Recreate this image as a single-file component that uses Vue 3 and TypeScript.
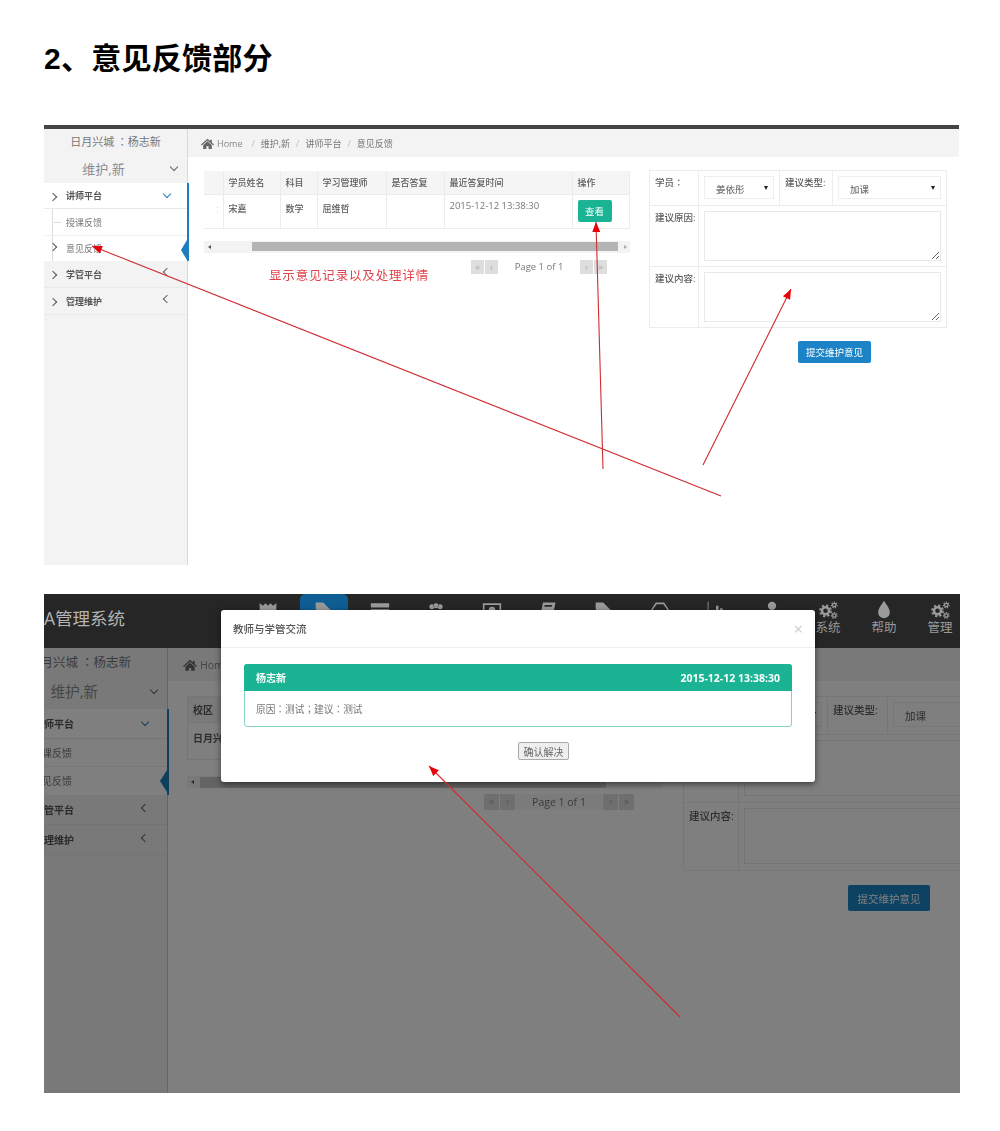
<script setup lang="ts">
interface Arrow {
  from: [number, number]
  to: [number, number]
}

interface NavItem {
  label?: string
  active?: boolean
  kind: 'path' | 'cogs'
  d?: string
}

const crumbs = ['维护,新', '讲师平台', '意见反馈']

const columns = [
  { title: '学员姓名', value: '宋嘉', width: 57 },
  { title: '科目', value: '数学', width: 37 },
  { title: '学习管理师', value: '屈维哲', width: 69 },
  { title: '是否答复', value: '', width: 58 },
  { title: '最近答复时间', value: '2015-12-12 13:38:30', width: 128 }
]

const tag = 'M2 3h9l11 11-8 8L2 11z'
const navItems: NavItem[] = [
  { kind: 'path', d: 'M2 4l4 3 3-3 3 3 3-3 3 3 4-3v16H2z' },
  { kind: 'path', active: true, d: tag },
  { kind: 'path', d: 'M1 4h22v5H1zM1 11h22v9H1zM4 14v2h12v-2z' },
  { kind: 'path', d: 'M7 5a3 3 0 1 1 0 6 3 3 0 0 1 0-6zM17 5a3 3 0 1 1 0 6 3 3 0 0 1 0-6zM12 4a3 3 0 1 1 0 6 3 3 0 0 1 0-6zM1 20v-5c0-3 12-3 22 0v5z' },
  { kind: 'path', d: 'M1 4h22v16H1zM3 6v12h18V6zM12 8a4 4 0 1 1 0 8 4 4 0 0 1 0-8z' },
  { kind: 'path', d: 'M6 3h15l-3 15H3zM8 6l-.5 2h9l.5-2z' },
  { kind: 'path', d: tag },
  { kind: 'path', d: 'M7 3h10l6 9-6 9H7l-6-9zM8 5l-5 7 5 7h8l5-7-5-7z' },
  { kind: 'path', d: 'M2 2h1v20H2zM7 12h3v9H7zM12 7h3v14h-3zM17 10h3v11h-3z' },
  { kind: 'path', d: 'M12 2a5 5 0 1 1 0 10 5 5 0 0 1 0-10zM3 22v-3c0-6 18-6 18 0v3z' },
  { kind: 'cogs', label: '系统' },
  { kind: 'path', label: '帮助', d: 'M12 1c3 5 7 9 7 14a7 7 0 0 1-14 0c0-5 4-9 7-14z' },
  { kind: 'cogs', label: '管理' }
]

const rawArrows: Arrow[] = [
  { from: [721, 496], to: [92, 246] },
  { from: [603, 469], to: [596, 222] },
  { from: [703, 465], to: [791, 289] },
  { from: [680, 1017], to: [429, 766] }
]

const arrows = rawArrows.map(({ from, to }) => {
  const dx = to[0] - from[0]
  const dy = to[1] - from[1]
  const len = Math.hypot(dx, dy)
  const ux = dx / len
  const uy = dy / len
  const bx = to[0] - ux * 10
  const by = to[1] - uy * 10
  const head = [
    `${to[0]},${to[1]}`,
    `${bx - uy * 4},${by + ux * 4}`,
    `${bx + uy * 4},${by - ux * 4}`
  ].join(' ')
  return { from, to, head }
})
</script>

<template>
  <div class="page">
    <h1 class="title">2、意见反馈部分</h1>

    <!-- first screenshot -->
    <section class="shot shot-top">
      <aside class="sidebar">
        <div class="side-user">日月兴城 ：杨志新</div>
        <div class="side-role">维护,新<i class="chev down"></i></div>
        <div class="side-open">
          <div class="side-item"><i class="chev right lead"></i><b>讲师平台</b><i class="chev down blue"></i></div>
          <div class="side-subs">
            <div class="side-sub tick">授课反馈</div>
            <div class="side-sub current"><i class="chev right sub-lead"></i>意见反馈</div>
          </div>
        </div>
        <div class="side-item closed"><i class="chev right lead"></i><b>学管平台</b><i class="chev left"></i></div>
        <div class="side-item closed"><i class="chev right lead"></i><b>管理维护</b><i class="chev left"></i></div>
      </aside>

      <div class="main">
        <div class="crumbs">
          <svg class="home" viewBox="0 0 24 20"><path d="M12 1l5 4.500V3h3v5.200L24 12l-1.500 1.500L12 4.500 1.500 13.500 0 12zM4 13l8-7 8 7v7h-6v-5h-4v5H4z" fill="currentColor" /></svg>
          <span class="home-text">Home</span>
          <template v-for="c in crumbs" :key="c"><span class="slash">/</span><span>{{ c }}</span></template>
        </div>
        <div class="body">
          <div class="records">
            <table class="grid">
              <thead>
                <tr>
                  <th class="cut"></th>
                  <th v-for="col in columns" :key="col.title" :style="{ width: col.width + 'px' }">{{ col.title }}</th>
                  <th>操作</th>
                </tr>
              </thead>
              <tbody>
                <tr>
                  <td class="cut">:</td>
                  <td v-for="col in columns" :key="col.title" :class="{ latin: col.width === 128 }">{{ col.value }}</td>
                  <td><button class="btn-view" type="button">查看</button></td>
                </tr>
              </tbody>
            </table>
            <div class="scroll"><span class="sc-arrow l"></span><div class="thumb"></div><span class="sc-arrow r"></span></div>
            <div class="below">
              <p class="note">显示意见记录以及处理详情</p>
              <div class="pager">
                <span class="pg">«</span><span class="pg">‹</span><span class="pg-mid">Page 1 of 1</span><span class="pg">›</span><span class="pg">»</span>
              </div>
            </div>
          </div>

          <div class="advice">
            <table class="form">
              <tbody>
                <tr class="r1">
                  <th class="c1">学员：</th>
                  <td class="c2"><div class="pick">姜依彤<i></i></div></td>
                  <th class="c3">建议类型:</th>
                  <td class="c4"><div class="pick">加课<i></i></div></td>
                </tr>
                <tr class="r2">
                  <th>建议原因:</th>
                  <td colspan="3"><textarea></textarea></td>
                </tr>
                <tr class="r2">
                  <th>建议内容:</th>
                  <td colspan="3"><textarea></textarea></td>
                </tr>
              </tbody>
            </table>
            <div class="submit-row"><button class="btn-submit" type="button">提交维护意见</button></div>
          </div>
        </div>
      </div>
    </section>

    <!-- second screenshot, dimmed behind the dialog -->
    <section class="shot shot-dim">
      <header class="topbar">
        <div class="logo">A管理系统</div>
        <nav class="nav">
          <div v-for="(item, i) in navItems" :key="i" class="nav-item" :class="{ active: item.active }">
            <svg v-if="item.kind === 'path'" class="nav-icon" viewBox="0 0 24 24"><path :d="item.d" fill="currentColor" fill-rule="evenodd" /></svg>
            <svg v-else class="nav-icon" viewBox="0 0 24 24" fill="none" stroke="currentColor">
              <circle cx="9" cy="13" r="4.200" stroke-width="3" />
              <circle cx="9" cy="13" r="6.500" stroke-width="2.400" stroke-dasharray="2.600 2.500" />
              <circle cx="19.500" cy="6" r="2" stroke-width="1.500" />
              <circle cx="19.500" cy="6" r="3.400" stroke-width="1.400" stroke-dasharray="1.600 1.400" />
              <circle cx="19.500" cy="18.500" r="2" stroke-width="1.500" />
              <circle cx="19.500" cy="18.500" r="3.400" stroke-width="1.400" stroke-dasharray="1.600 1.400" />
            </svg>
            <span v-if="item.label" class="nav-label">{{ item.label }}</span>
          </div>
        </nav>
      </header>

      <div class="under">
        <aside class="sidebar">
          <div class="side-user">日月兴城 ：杨志新</div>
          <div class="side-role">维护,新<i class="chev down"></i></div>
          <div class="side-open">
            <div class="side-item"><b>讲师平台</b><i class="chev down blue"></i></div>
            <div class="side-subs">
              <div class="side-sub">授课反馈</div>
              <div class="side-sub current">意见反馈</div>
            </div>
          </div>
          <div class="side-item closed"><b>学管平台</b><i class="chev left"></i></div>
          <div class="side-item closed"><b>管理维护</b><i class="chev left"></i></div>
        </aside>

        <div class="main">
          <div class="crumbs">
            <svg class="home" viewBox="0 0 24 20"><path d="M12 1l5 4.500V3h3v5.200L24 12l-1.500 1.500L12 4.500 1.500 13.500 0 12zM4 13l8-7 8 7v7h-6v-5h-4v5H4z" fill="currentColor" /></svg>
            <span class="home-text">Home</span>
          </div>
          <div class="body">
            <div class="records">
              <table class="grid">
                <thead>
                  <tr>
                    <th class="campus">校区</th>
                    <th v-for="col in columns" :key="col.title"></th>
                  </tr>
                </thead>
                <tbody>
                  <tr>
                    <td class="campus">日月兴城</td>
                    <td v-for="col in columns" :key="col.title"></td>
                  </tr>
                </tbody>
              </table>
              <div class="scroll"><span class="sc-arrow l"></span><div class="thumb"></div></div>
              <div class="below">
                <div class="pager">
                  <span class="pg">«</span><span class="pg">‹</span><span class="pg-mid">Page 1 of 1</span><span class="pg">›</span><span class="pg">»</span>
                </div>
              </div>
            </div>

            <div class="advice">
              <table class="form">
                <tbody>
                  <tr class="r1">
                    <th class="c1"></th>
                    <td class="c2"><div class="pick"><i></i></div></td>
                    <th class="c3">建议类型:</th>
                    <td class="c4"><div class="pick">加课<i></i></div></td>
                  </tr>
                  <tr class="r2">
                    <th></th>
                    <td colspan="3"><textarea></textarea></td>
                  </tr>
                  <tr class="r2">
                    <th>建议内容:</th>
                    <td colspan="3"><textarea></textarea></td>
                  </tr>
                </tbody>
              </table>
              <div class="submit-row"><button class="btn-submit" type="button">提交维护意见</button></div>
            </div>
          </div>
        </div>
      </div>

      <div class="backdrop"></div>

      <div class="modal">
        <div class="modal-head">
          <span>教师与学管交流</span>
          <span class="modal-close">×</span>
        </div>
        <div class="modal-body">
          <div class="talk">
            <div class="talk-head"><span>杨志新</span><span class="talk-time">2015-12-12 13:38:30</span></div>
            <div class="talk-text">原因：测试；建议：测试</div>
          </div>
          <div class="modal-foot"><button class="btn-ok" type="button">确认解决</button></div>
        </div>
      </div>
    </section>

    <!-- red annotation arrows drawn over both screenshots -->
    <svg class="marks" viewBox="0 0 1000 1131">
      <g v-for="(a, i) in arrows" :key="i">
        <line :x1="a.from[0]" :y1="a.from[1]" :x2="a.to[0]" :y2="a.to[1]" stroke="#cf2b30" stroke-width="1.100" />
        <polygon :points="a.head" fill="#e8000b" />
      </g>
    </svg>
  </div>
</template>

<style>
html,
body {
  margin: 0;
  background: #fff;
}
</style>

<style scoped>
.page {
  position: relative;
  width: 1000px;
  height: 1131px;
  padding-top: 41px;
  box-sizing: border-box;
  overflow: hidden;
  font-family: "Open Sans", "Noto Sans CJK SC", sans-serif;
  color: #676a6c;
}

.title {
  margin: 0 0 48px 44px;
  font-family: "Liberation Sans", "Noto Sans CJK SC", sans-serif;
  font-size: 30px;
  letter-spacing: 0.25px;
  line-height: 36px;
  font-weight: 700;
  color: #000;
}

.marks {
  position: absolute;
  left: 0;
  top: 0;
  width: 1000px;
  height: 1131px;
  z-index: 5;
  pointer-events: none;
}

.shot {
  position: relative;
  overflow: hidden;
  margin-left: 44px;
  filter: blur(0.35px);
}

.shot-top {
  display: flex;
  width: 915px;
  height: 440px;
  border-top: 4px solid #444;
  box-sizing: border-box;
}

.sidebar {
  flex: none;
  width: 143px;
  height: 100%;
  background: #f3f3f4;
  border-right: 1px solid #d8d8d8;
  box-sizing: content-box;
}

.side-user {
  height: 28px;
  line-height: 25px;
  text-align: center;
  font-family: "Noto Sans CJK TC", "Noto Sans CJK SC", sans-serif;
  font-size: 11px;
  color: #777;
}

.side-role {
  position: relative;
  height: 26px;
  line-height: 24px;
  padding-right: 24px;
  text-align: center;
  font-size: 13px;
  color: #8c8c8c;
}

.side-role .chev {
  position: absolute;
  right: 10px;
  top: 7px;
}

.side-open {
  position: relative;
  background: #fff;
  box-shadow: 2px 0 0 #1c7ebb;
}

.side-item {
  position: relative;
  display: flex;
  align-items: center;
  height: 26px;
  padding-left: 22px;
  font-size: 9px;
  color: #555;
  border-bottom: 1px solid #e9e9e9;
  box-sizing: border-box;
}

.side-item b {
  font-weight: 700;
}

.side-item .chev:last-child {
  position: absolute;
  right: 17px;
  top: 8px;
}

.side-item.closed {
  height: 27px;
}

.side-subs {
  position: relative;
  margin-left: 8px;
  border-left: 1px solid #dcdcdc;
}

.side-sub {
  position: relative;
  height: 27px;
  line-height: 27px;
  margin-left: -8px;
  font-size: 9px;
  color: #777;
  border-bottom: 1px solid #eee;
  padding-left: 21px;
  box-sizing: border-box;
}

.side-sub.current {
  height: 25px;
  line-height: 25px;
  border-bottom: none;
}

.side-sub.tick::before {
  content: "";
  position: absolute;
  left: 9px;
  top: 13px;
  width: 7px;
  border-top: 1px solid #ddd;
}

.side-sub.current::after {
  content: "";
  position: absolute;
  right: 0;
  top: 4px;
  width: 6px;
  height: 20px;
  background: #1c7ebb;
  clip-path: polygon(100% 0, 100% 100%, 0 50%);
}

.chev {
  display: block;
  width: 5px;
  height: 5px;
  border-right: 1px solid #666;
  border-bottom: 1px solid #666;
}

.chev.down {
  transform: rotate(45deg);
}

.chev.left {
  transform: rotate(135deg);
}

.chev.right {
  transform: rotate(-45deg);
}

.chev.blue {
  border-color: #2a7bb5;
}

.chev.lead {
  position: absolute;
  left: 6px;
  top: 11px;
  border-color: #555;
}

.chev.sub-lead {
  position: absolute;
  left: 5px;
  top: 8px;
  border-color: #555;
}

.main {
  flex: 1;
  min-width: 0;
  display: flex;
  flex-direction: column;
}

.crumbs {
  display: flex;
  align-items: center;
  flex: none;
  height: 28px;
  padding-left: 13px;
  background: #f3f3f4;
  font-size: 9px;
  color: #777;
}

.home {
  width: 13px;
  height: 11px;
  margin-right: 3px;
  color: #666;
}

.home-text {
  margin-right: 3px;
  font-size: 9px;
  color: #888;
}

.slash {
  margin: 0 6px;
  color: #bbb;
}

.body {
  display: flex;
  gap: 19px;
  padding: 13px 0 0 16px;
}

.records {
  flex: none;
  width: 426px;
  padding-top: 1px;
}

.grid {
  width: 426px;
  border-collapse: collapse;
  table-layout: fixed;
  font-size: 9px;
}

.grid th,
.grid td {
  border: 1px solid #ececec;
  padding: 0 0 0 5px;
  text-align: left;
  color: #5c5c5c;
  box-sizing: border-box;
}

.grid th {
  height: 23px;
  background: #f5f5f6;
  font-weight: 500;
  border-top: none;
}

.grid td {
  height: 34px;
  vertical-align: top;
  padding-top: 7px;
  font-weight: 500;
}

.grid .cut {
  width: 19px;
  border-left: none;
  color: #cfd8e0;
  padding-left: 12px;
}

.grid td.latin {
  font-size: 9.500px;
  font-weight: 400;
  padding-top: 4px;
  color: #777;
}

.btn-view {
  display: block;
  width: 34px;
  height: 22px;
  margin: -2px 0 0 0;
  padding: 0;
  border: none;
  border-radius: 2px;
  background: #1ab394;
  color: #fff;
  font-family: inherit;
  font-size: 9.500px;
}

.scroll {
  display: flex;
  align-items: center;
  height: 12px;
  margin-top: 12px;
  background: #f3f3f3;
  padding: 0 0 0 48px;
  position: relative;
}

.thumb {
  width: 366px;
  height: 9px;
  background: #b4b4b4;
}

.sc-arrow {
  position: absolute;
  width: 0;
  height: 0;
  border-top: 2.500px solid transparent;
  border-bottom: 2.500px solid transparent;
}

.sc-arrow.l {
  left: 4px;
  border-right: 3px solid #555;
}

.sc-arrow.r {
  right: 3px;
  border-left: 3px solid #aaa;
}

.below {
  position: relative;
  display: flex;
  height: 40px;
}

.note {
  margin: 15px 0 0 65px;
  font-size: 12.500px;
  letter-spacing: 0.830px;
  line-height: 16px;
  color: #e0454e;
}

.pager {
  position: absolute;
  left: 267px;
  top: 7px;
  display: flex;
  height: 14px;
  font-size: 9.500px;
  color: #777;
}

.pg {
  width: 13px;
  text-align: center;
  line-height: 13px;
  margin-right: 1px;
  background: #dedede;
  color: #aaa;
  box-sizing: border-box;
}

.pg-mid {
  width: 80px;
  text-align: center;
  line-height: 14px;
  background: #fff;
  margin-right: 1px;
}

.advice {
  flex: none;
  width: 298px;
}

.form {
  width: 298px;
  border-collapse: collapse;
  table-layout: fixed;
  font-size: 9.500px;
}

.form th,
.form td {
  border: 1px solid #ececec;
  text-align: left;
  vertical-align: top;
  color: #5c5c5c;
  font-weight: 500;
  box-sizing: border-box;
}

.form th {
  padding: 4px 0 0 5px;
}

.form td {
  padding: 5px;
}

.form .c1 {
  width: 49px;
  font-family: "Noto Sans CJK TC", "Noto Sans CJK SC", sans-serif;
}

.form .c2 {
  width: 81px;
}

.form .c3 {
  width: 53px;
  padding-top: 4px;
}

.r1 {
  height: 35px;
}

.r2 {
  height: 61px;
}

.pick {
  position: relative;
  height: 23px;
  line-height: 25px;
  padding-left: 11px;
  border: 1px solid #eee;
  box-sizing: border-box;
  font-size: 9.500px;
  color: #777;
}

.pick i {
  position: absolute;
  right: 5px;
  top: 9px;
  width: 0;
  height: 0;
  border-left: 2.500px solid transparent;
  border-right: 2.500px solid transparent;
  border-top: 4px solid #222;
}

.form textarea {
  display: block;
  width: 100%;
  height: 50px;
  margin: 0;
  padding: 0;
  border: 1px solid #e9e9e9;
  box-sizing: border-box;
  background: #fff;
  outline: none;
}

.submit-row {
  display: flex;
  margin-top: 13px;
  padding-left: 149px;
}

.btn-submit {
  width: 73px;
  height: 22px;
  padding: 0;
  border: none;
  border-radius: 2px;
  background: #1c84c6;
  color: #fff;
  font-family: inherit;
  font-size: 9.500px;
}

/* second screenshot: same page a little larger */
.shot-dim {
  width: 916px;
  height: 499px;
  margin-top: 29px;
}

.topbar {
  position: relative;
  z-index: 2;
  display: flex;
  height: 54px;
  background: #262626;
}

.logo {
  flex: none;
  width: 196px;
  line-height: 48px;
  font-size: 17.500px;
  color: #b3b3b3;
}

.nav {
  display: flex;
}

.nav-item {
  position: relative;
  display: flex;
  flex-direction: column;
  align-items: center;
  width: 56px;
  padding-top: 6px;
  box-sizing: border-box;
  color: #9a9a9a;
}

.nav-item.active::before {
  content: "";
  position: absolute;
  left: 4px;
  right: 4px;
  top: 0;
  height: 40px;
  border-radius: 5px;
  background: #0e5e94;
}

.nav-icon {
  position: relative;
  width: 20px;
  height: 20px;
}

.nav-label {
  font-size: 12.500px;
  line-height: 16px;
  margin-top: 0;
}

.under {
  display: flex;
  height: 445px;
}

.shot-dim .sidebar {
  width: 175px;
  margin-left: -52px;
  border-right-color: #ccc;
}

.shot-dim .side-user {
  height: 30px;
  line-height: 28px;
  font-size: 12.500px;
}

.shot-dim .side-role {
  height: 31px;
  line-height: 28px;
  padding-right: 10px;
  font-size: 14.500px;
}

.shot-dim .side-role .chev {
  top: 9px;
  right: 10px;
}

.shot-dim .side-item {
  height: 30px;
  padding-left: 35px;
  font-size: 10px;
}

.shot-dim .side-item b {
  margin-left: 7px;
}

.shot-dim .side-item .chev:last-child {
  right: 19px;
  top: 10px;
}

.shot-dim .side-subs {
  margin: 0;
  border: none;
}

.shot-dim .side-sub {
  height: 28px;
  line-height: 28px;
  margin: 0;
  padding-left: 40px;
  font-size: 10px;
}

.shot-dim .side-sub.current::after {
  top: 3px;
  width: 7px;
  height: 22px;
}

.shot-dim .crumbs {
  height: 33px;
  padding-left: 15px;
}

.shot-dim .home {
  width: 14px;
  height: 12px;
}

.shot-dim .home-text {
  font-size: 10.500px;
}

.shot-dim .body {
  padding: 15px 0 0 19px;
  gap: 21px;
}

.shot-dim .records {
  width: 475px;
  padding-top: 0;
}

.shot-dim .grid {
  width: 475px;
  font-size: 10px;
  border-left: 1px solid #ececec;
}

.shot-dim .grid th {
  height: 26px;
  border-top: 1px solid #ececec;
}

.shot-dim .grid td {
  height: 37px;
  font-weight: 700;
}

.shot-dim .grid .campus {
  font-weight: 700;
}

.shot-dim .scroll {
  margin-top: 16px;
  padding-left: 13px;
}

.shot-dim .thumb {
  width: 406px;
  height: 11px;
  background: #c8c8c8;
}

.shot-dim .pager {
  left: 297px;
  top: 6px;
  height: 16px;
  font-size: 10.500px;
}

.shot-dim .pg {
  width: 15px;
  line-height: 15px;
}

.shot-dim .pg-mid {
  width: 86px;
  line-height: 16px;
  background: #f6f6f6;
}

.shot-dim .advice,
.shot-dim .form {
  width: 331px;
  font-size: 10.500px;
}

.shot-dim .form th {
  padding-top: 5px;
}

.shot-dim .form .c1 {
  width: 55px;
}

.shot-dim .form .c2 {
  width: 89px;
}

.shot-dim .form .c3 {
  width: 60px;
}

.shot-dim .r1 {
  height: 38px;
}

.shot-dim .r2 {
  height: 68px;
}

.shot-dim .form textarea {
  height: 56px;
}

.shot-dim .pick {
  height: 25px;
  line-height: 27px;
  font-size: 10.500px;
}

.shot-dim .submit-row {
  margin-top: 14px;
  padding-left: 165px;
}

.shot-dim .btn-submit {
  width: 82px;
  height: 26px;
  font-size: 10.500px;
}

.backdrop {
  position: absolute;
  inset: 0;
  z-index: 1;
  background: rgba(0, 0, 0, 0.5);
}

.modal {
  position: absolute;
  left: 177px;
  top: 16px;
  z-index: 3;
  width: 594px;
  height: 172px;
  background: #fff;
  border-radius: 3px;
  box-shadow: 0 2px 6px rgba(0, 0, 0, 0.55);
}

.modal-head {
  display: flex;
  align-items: center;
  justify-content: space-between;
  height: 38px;
  padding: 0 12px;
  border-bottom: 1px solid #eee;
  font-size: 10.500px;
  font-weight: 500;
  color: #555;
  box-sizing: border-box;
}

.modal-close {
  font-size: 16px;
  color: #ccc;
}

.modal-body {
  padding: 16px 23px 0;
}

.talk {
  height: 63px;
  border: 1px solid #87d3c3;
  border-radius: 3px;
  box-sizing: border-box;
}

.talk-head {
  display: flex;
  justify-content: space-between;
  align-items: center;
  height: 27px;
  margin: -1px -1px 0;
  padding: 0 12px;
  border-radius: 3px 3px 0 0;
  background: #1ab394;
  color: #fff;
  font-size: 10px;
  font-weight: 700;
}

.talk-time {
  font-size: 10.500px;
}

.talk-text {
  padding: 10px 11px 0;
  font-family: "Noto Sans CJK TC", "Noto Sans CJK SC", sans-serif;
  font-size: 9.700px;
  line-height: 16px;
  color: #777;
}

.modal-foot {
  display: flex;
  justify-content: center;
  margin-top: 15px;
  padding-left: 51px;
}

.btn-ok {
  width: 51px;
  height: 18px;
  padding: 0;
  border: 1px solid #aaa;
  border-radius: 2px;
  background: #eee;
  color: #666;
  font-family: inherit;
  font-size: 10px;
}
</style>
